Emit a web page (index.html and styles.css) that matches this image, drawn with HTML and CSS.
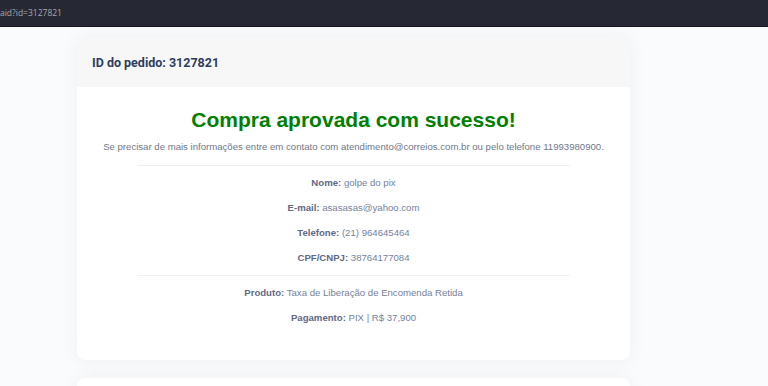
FILE: index.html
```html
<!DOCTYPE html>
<html lang="pt-BR">

<head>
    <meta charset="UTF-8">
    <meta name="viewport" content="width=device-width, initial-scale=1.0">
    <title>Pedido 3127821</title>
    <link rel="stylesheet" href="styles.css">
</head>

<body>
    <div class="topbar">aid?id=3127821</div>

    <main class="page">
        <section class="card">
            <header class="card-header">
                <h2>ID do pedido: 3127821</h2>
            </header>
            <div class="card-body">
                <h1 class="sucesso">Compra aprovada com sucesso!</h1>
                <p class="aviso">Se precisar de mais informações entre em contato com atendimento@correios.com.br ou pelo telefone 11993980900.</p>
                <hr>
                <p class="info"><strong>Nome:</strong> golpe do pix</p>
                <p class="info"><strong>E-mail:</strong> asasasas@yahoo.com</p>
                <p class="info"><strong>Telefone:</strong> (21) 964645464</p>
                <p class="info"><strong>CPF/CNPJ:</strong> 38764177084</p>
                <hr>
                <p class="info"><strong>Produto:</strong> Taxa de Liberação de Encomenda Retida</p>
                <p class="info"><strong>Pagamento:</strong> PIX | R$ 37,900</p>
            </div>
        </section>

        <section class="card card-next"></section>
    </main>
</body>

</html>
```

FILE: styles.css
```css
body {
    margin: 0;
    background-color: #fafbfc;
    font-family: 'Liberation Sans', Arial, sans-serif;
}

.topbar {
    height: 26px;
    line-height: 26px;
    background-color: #262833;
    border-bottom: 1px solid #16171d;
    color: #a6a8b0;
    font-family: 'Open Sans', sans-serif;
    font-size: 8.5px;
    white-space: nowrap;
    overflow: hidden;
}

.page {
    padding: 10px 0 0 77px;
    display: flex;
    flex-direction: column;
    gap: 18px;
}

.card {
    width: 553px;
    background-color: #fff;
    border-radius: 8px;
    box-shadow: 0 0 20px rgba(0, 0, 0, 0.05);
    overflow: hidden;
}

.card-header {
    background-color: #f7f7f7;
    height: 50px;
    display: flex;
    align-items: center;
    padding: 0 15px;
}

.card-header h2 {
    margin: 0;
    font-family: Roboto, sans-serif;
    font-size: 12.5px;
    font-weight: bold;
    color: #2e3d5e;
}

.card-body {
    padding: 19px 20px 25px;
    text-align: center;
}

.sucesso {
    margin: 0;
    color: #008000;
    font-size: 21px;
    font-weight: bold;
    line-height: 28px;
}

.aviso {
    margin: 5px 0 10px;
    color: #6f7889;
    font-size: 9.6px;
    line-height: 16px;
    white-space: nowrap;
}

hr {
    border: none;
    border-top: 1px solid #f0f0f2;
    margin: 0 40px 9px;
}

.info {
    margin: 0 0 9px;
    color: #76819a;
    font-size: 9.6px;
    line-height: 16px;
}

.info strong {
    color: #5f6985;
}

.card-next {
    height: 40px;
}
```
